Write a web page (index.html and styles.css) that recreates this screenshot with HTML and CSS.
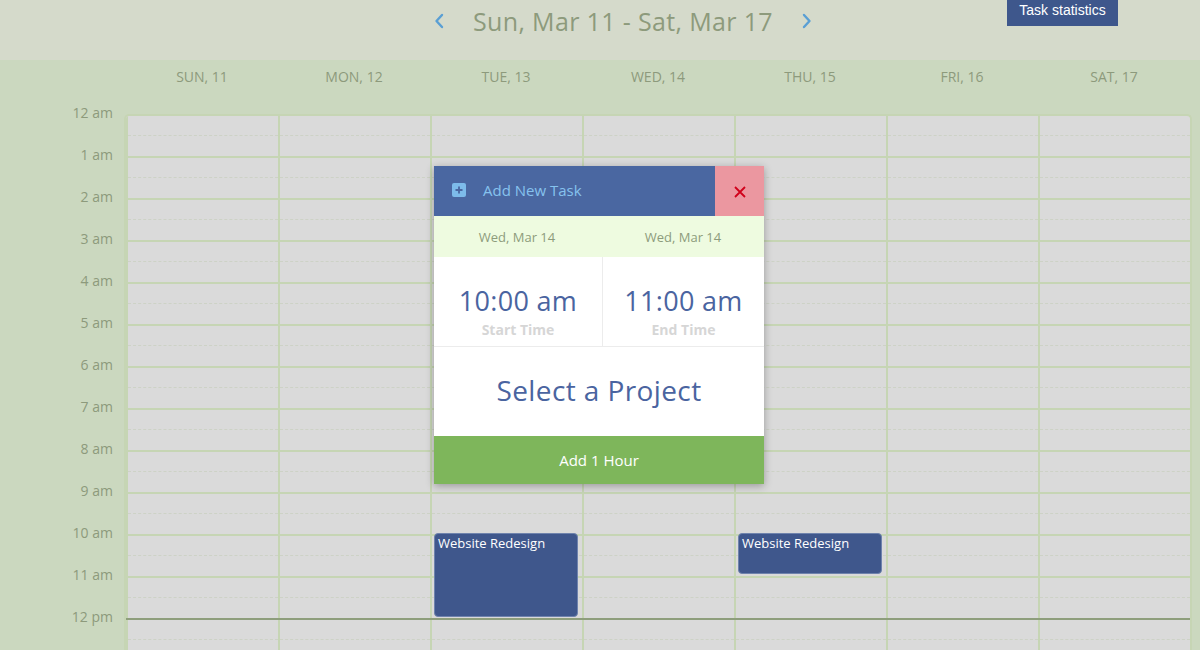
FILE: index.html
```html
<!DOCTYPE html>
<html>
<head>
<meta charset="utf-8">
<link rel="stylesheet" href="styles.css">
</head>
<body>
<div class="page">
  <header class="topbar">
    <nav class="weeknav">
      <svg class="chev" width="10" height="16" viewBox="0 0 10 16"><path d="M8 2 L2.5 8 L8 14" fill="none" stroke="#5a9fd4" stroke-width="2.4" stroke-linecap="round" stroke-linejoin="round"/></svg>
      <span class="range">Sun, Mar 11 - Sat, Mar 17</span>
      <svg class="chev" width="10" height="16" viewBox="0 0 10 16"><path d="M2 2 L7.5 8 L2 14" fill="none" stroke="#5a9fd4" stroke-width="2.4" stroke-linecap="round" stroke-linejoin="round"/></svg>
    </nav>
    <button class="stats">Task statistics</button>
  </header>

  <main class="calendar">
    <div class="corner"></div>
    <div class="dayheads">
      <div class="dayhead">SUN, 11</div>
      <div class="dayhead">MON, 12</div>
      <div class="dayhead">TUE, 13</div>
      <div class="dayhead">WED, 14</div>
      <div class="dayhead">THU, 15</div>
      <div class="dayhead">FRI, 16</div>
      <div class="dayhead">SAT, 17</div>
    </div>

    <div class="times">
      <div class="tlabel">12 am</div>
      <div class="tlabel">1 am</div>
      <div class="tlabel">2 am</div>
      <div class="tlabel">3 am</div>
      <div class="tlabel">4 am</div>
      <div class="tlabel">5 am</div>
      <div class="tlabel">6 am</div>
      <div class="tlabel">7 am</div>
      <div class="tlabel">8 am</div>
      <div class="tlabel">9 am</div>
      <div class="tlabel">10 am</div>
      <div class="tlabel">11 am</div>
      <div class="tlabel">12 pm</div>
    </div>

    <div class="grid" id="grid">
      <div class="nowline"></div>
    </div>
  </main>

  <section class="modal">
    <div class="m-head">
      <div class="m-title">
        <svg width="14" height="14" viewBox="0 0 14 14"><rect x="0" y="0" width="14" height="14" rx="2" fill="#7dbbea"/><path d="M7 3.5 V10.5 M3.5 7 H10.5" stroke="#4a67a1" stroke-width="1.8"/></svg>
        <span>Add New Task</span>
      </div>
      <div class="m-close">
        <svg width="12" height="12" viewBox="0 0 12 12"><path d="M1 1 L11 11 M11 1 L1 11" stroke="#d0021b" stroke-width="1.8"/></svg>
      </div>
    </div>
    <div class="m-dates">
      <div>Wed, Mar 14</div>
      <div>Wed, Mar 14</div>
    </div>
    <div class="m-times">
      <div class="m-time">
        <div class="big">10:00 am</div>
        <div class="cap">Start Time</div>
      </div>
      <div class="m-time">
        <div class="big">11:00 am</div>
        <div class="cap">End Time</div>
      </div>
    </div>
    <div class="m-project">Select a Project</div>
    <button class="m-add">Add 1 Hour</button>
  </section>
</div>
<script>
  var grid = document.getElementById('grid');
  for (var d = 0; d < 7; d++) {
    var col = document.createElement('div');
    col.className = 'col';
    for (var h = 0; h < 13; h++) {
      var c = document.createElement('div');
      c.className = 'hour';
      var half = document.createElement('div');
      half.className = 'half';
      c.appendChild(half);
      col.appendChild(c);
    }
    if (d === 2 || d === 4) {
      var ev = document.createElement('div');
      ev.className = 'event';
      ev.style.top = '417px';
      ev.style.height = (d === 2 ? 84 : 41) + 'px';
      ev.textContent = 'Website Redesign';
      col.appendChild(ev);
    }
    grid.appendChild(col);
  }
</script>
</body>
</html>
```

FILE: styles.css
```css
* { box-sizing: border-box; }
html, body { margin: 0; padding: 0; }
body {
  width: 1200px;
  height: 650px;
  overflow: hidden;
  font-family: "Open Sans", "Noto Sans", sans-serif;
  background: #cbd8bf;
}
.page { position: relative; width: 1200px; height: 650px; overflow: hidden; }

.topbar {
  height: 60px;
  background: #d5dacb;
  display: flex;
  align-items: flex-start;
}
.weeknav {
  display: flex;
  align-items: center;
  height: 42px;
  padding-left: 434px;
  gap: 29px;
}
.range {
  font-size: 25px;
  color: #8d9a7c;
  letter-spacing: 0.35px;
}
.stats {
  margin-left: auto;
  margin-right: 82px;
  width: 111px;
  height: 26px;
  border: 0;
  padding: 0 0 7px;
  background: #3e578c;
  color: #fff;
  font-family: "Liberation Sans", Arial, sans-serif;
  font-size: 14px;
  line-height: 18px;
}

.calendar {
  display: grid;
  grid-template-columns: 124px 1068px;
  grid-template-rows: 54px 536px;
}
.dayheads {
  display: grid;
  grid-template-columns: repeat(7, 1fr);
  padding: 0 2px;
}
.dayhead {
  text-align: center;
  line-height: 34px;
  font-size: 14px;
  color: #8d9a7c;
}
.times {
  margin-top: -11px;
  padding-right: 11px;
}
.tlabel {
  height: 42px;
  line-height: 20px;
  text-align: right;
  font-size: 14px;
  color: #8d9a7c;
}
.grid {
  position: relative;
  display: grid;
  grid-template-columns: repeat(7, 1fr);
  background: #dadada;
  border: 2px solid #c6d5b4;
  border-bottom: 0;
  border-radius: 5px 5px 0 0;
  overflow: hidden;
}
.col {
  position: relative;
  border-left: 2px solid #c6d5b4;
}
.col:first-child { border-left: 0; }
.hour {
  height: 42px;
  border-bottom: 2px solid #c6d5b4;
}
.half {
  height: 20px;
  border-bottom: 1px dashed #cdd2c6;
}
.nowline {
  position: absolute;
  left: 0;
  right: 0;
  top: 502px;
  height: 2px;
  background: #8e9e7c;
  z-index: 2;
}
.event {
  position: absolute;
  left: 2px;
  width: 144px;
  background: #3f578c;
  border: 1px solid #6f83ad;
  border-radius: 4px;
  color: #fff;
  font-size: 13px;
  line-height: 16px;
  padding: 1px 3px;
  z-index: 3;
}

.modal {
  position: absolute;
  left: 434px;
  top: 166px;
  width: 330px;
  background: #fff;
  box-shadow: 0 2px 8px rgba(0,0,0,0.3);
  z-index: 10;
}
.m-head {
  display: flex;
  height: 50px;
  background: #4a67a1;
}
.m-title {
  flex: 1;
  display: flex;
  align-items: center;
  gap: 17px;
  padding-left: 18px;
  padding-bottom: 2px;
  color: #86c2ee;
  font-size: 15px;
}
.m-close {
  width: 49px;
  background: #eb97a0;
  display: flex;
  align-items: center;
  justify-content: center;
  padding-top: 2px;
}
.m-dates {
  display: grid;
  grid-template-columns: 168px 162px;
  height: 41px;
  align-items: center;
  background: #eefbe0;
  color: #8d9b7c;
  font-size: 13px;
}
.m-dates div { text-align: center; }
.m-dates div:first-child { padding-right: 2px; }
.m-times {
  display: grid;
  grid-template-columns: 168px 162px;
  height: 90px;
  border-bottom: 1px solid #ececec;
}
.m-time {
  text-align: center;
  padding-top: 27px;
}
.m-time + .m-time { border-left: 1px solid #ececec; }
.big {
  font-size: 27px;
  line-height: 34px;
  color: #4a64a0;
  letter-spacing: 0.3px;
}
.cap {
  margin-top: 4px;
  font-size: 14px;
  font-weight: 700;
  line-height: 16px;
  color: #d6d6d6;
}
.m-project {
  height: 89px;
  display: flex;
  align-items: center;
  justify-content: center;
  padding-bottom: 3px;
  font-size: 28px;
  color: #4a64a0;
  letter-spacing: 0.4px;
}
.m-add {
  display: block;
  width: 100%;
  height: 48px;
  border: 0;
  background: #7eb65b;
  color: #fff;
  font-family: "Open Sans", "Noto Sans", sans-serif;
  font-size: 15px;
}
```
